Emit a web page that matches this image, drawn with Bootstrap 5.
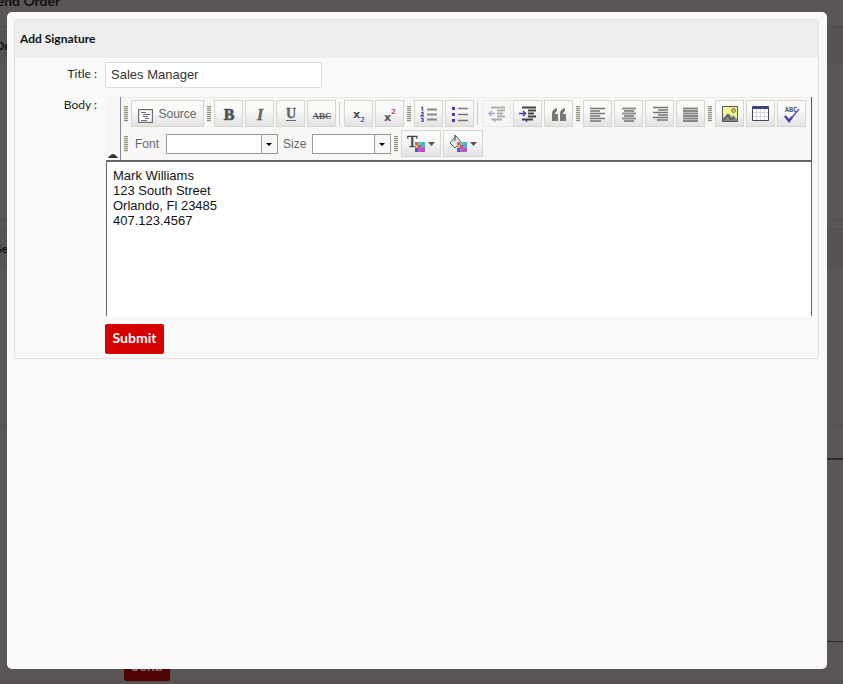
<!DOCTYPE html>
<html lang="en">
<head>
<meta charset="utf-8">
<meta name="viewport" content="width=device-width, initial-scale=1">
<title>Add Signature</title>
<link rel="stylesheet" href="https://cdn.jsdelivr.net/npm/bootstrap@5.3.0/dist/css/bootstrap.min.css">
<style>
  body { background: #5a5655; font-family: Lato, sans-serif; font-size: 12px; color: #222; overflow: hidden; }

  /* dimmed page behind the dialog */
  .order-page { color: #141212; }
  .order-page h1 { font-size: 14px; line-height: 18px; font-weight: 700; margin: -8px 0 16px -11px; }
  .order-page h2 { font-size: 12px; line-height: 38px; font-weight: 700; margin: 0; background: #575353; text-indent: -5px; }
  .order-panel { border-top: 1px solid #524e4d; border-bottom: 1px solid #524e4d; }
  .panel-items { height: 155px; }
  .panel-mail { height: 158px; border-bottom: 1px solid #524e4d; }
  .mail-editor { margin: 32px 0 9px 124px; height: 184px; border-top: 2px solid #2d2a2a; border-bottom: 1px solid #2d2a2a; }
  .send-btn { background: #4f0404; color: #817878; border: 0; border-radius: 2px; font-weight: 700; font-size: 14px; width: 46px; height: 30px; margin-left: 124px; padding: 0 0 2px; display: block; }

  .overlay { padding: 12px 16px 15px 7px; }
  .sheet { background: #f9f9f9; border-radius: 5px; padding: 7px 8px 7px 7px; }
  .sig-panel { border: 1px solid #e0e0e0; border-radius: 3px; padding-bottom: 4px; }
  .sig-head { background: #eee; line-height: 38px; font-weight: 700; padding-left: 5px; color: #111; }
  .sig-row { padding-right: 6px; }
  .body-row { margin-top: 9px; }
  .sig-label { width: 82px; text-align: right; line-height: 16px; margin-right: 8px; flex: none; }
  .arial { font-family: "Liberation Sans", Arial, sans-serif; }
  .title-box { width: 217px; height: 26px; border: 1px solid #ddd; border-radius: 2px; padding: 0 5px 1px; font-size: 13px; color: #333; background: #fff; }

  .editor { margin-left: 1px; }
  .tool-area { background: #f7f7f7; border-right: 1px solid #555; border-bottom: 2px solid #666; height: 65px; }
  .collapser { width: 15px; border: 0; border-right: 1px solid #888; background: #f6f6f5; padding: 0 0 2px; line-height: 0; }
  .tools { border-top: 1px solid #efeee6; padding: 2px 0 0 2px; }
  .tool-row { gap: 2px; margin-bottom: 3px; color: #666; font-size: 13px; }
  .tool-row label { font-size: 12px; }
  .tool { width: 29px; height: 27px; padding: 0; border: 1px solid #d9d7c9; background: linear-gradient(#fafafa 35%, #e2e2e4); display: flex; align-items: center; justify-content: center; color: #666; }
  .tool svg { display: block; }
  .tool-source { width: 73px; gap: 5px; font-size: 12px; }
  .tool-wide { width: 40px; gap: 3px; }
  .tool:disabled { border-color: #eae9e2; background: #f6f6f6; }
  .tool:disabled svg { opacity: .4; }
  .grip { width: 4px; height: 16px; margin: 0 1px; background: repeating-linear-gradient(#8f8d72 0 1px, #e6e5da 1px 2px); }
  .split { width: 1px; height: 23px; background: #ccc; margin: 0 2px 0 1px; }
  .drop { height: 20px; appearance: none; border: 1px solid #999; border-radius: 0; padding: 0 18px 0 2px; font-size: 12px;
    background: #fff url("data:image/svg+xml,%3Csvg xmlns='http://www.w3.org/2000/svg' width='16' height='18'%3E%3Cpath fill='%23f7f7f5' d='M0 0h16v18H0z'/%3E%3Cpath fill='%23999' d='M0 0h1v18H0z'/%3E%3Cpath d='M5 8h6l-3 3z'/%3E%3C/svg%3E") no-repeat right top; }
  .font-label { margin-left: 4px; }
  .font-drop { width: 112px; margin: 0 3px 0 5px; }
  .size-drop { width: 79px; margin-left: 4px; }
  .sig-body { display: block; height: 154px; border: 1px solid #666; border-width: 0 1px; padding: 6px; font-size: 13px; line-height: 15px; color: #111; resize: none; background: #fff; outline: 0; }
  .submit-btn { margin: 8px 0 0 90px; width: 59px; height: 30px; padding: 0 0 4px; background: #d60000; color: #fff; border: 0; border-radius: 2px; font-weight: 700; font-size: 14px; }
</style>
<script src="https://cdn.jsdelivr.net/npm/bootstrap@5.3.0/dist/js/bootstrap.bundle.min.js"></script>
</head>
<body>
<svg class="d-none" aria-hidden="true">
  <defs>
    <g id="swatches">
      <path fill="#a07040" d="M0 0h10v10H0z"/>
      <path fill="#e06060" d="M0 0h3v3H0z"/><path fill="#50c8c0" d="M3 0h3v3H3z"/><path fill="#58b0b8" d="M6 0h4v3H6z"/>
      <path fill="#d8b040" d="M0 3h3v3H0z"/><path fill="#d05080" d="M3 3h3v3H3z"/><path fill="#50a8e0" d="M6 3h4v3H6z"/>
      <path fill="#5060c0" d="M0 6h3v4H0z"/><path fill="#c060c8" d="M3 6h3v4H3z"/><path fill="#b058c0" d="M6 6h4v4H6z"/>
    </g>
  </defs>
</svg>

<div class="order-page">
  <h1>Send Order</h1>
  <section class="order-panel"><h2>Order</h2><div class="panel-items"></div></section>
  <section class="order-panel mt-2"><h2>Send</h2><div class="panel-mail"></div>
    <div class="mail-editor"></div>
    <button type="button" class="send-btn">Send</button>
  </section>
</div>

<div class="overlay position-fixed top-0 start-0 w-100 h-100 d-flex" role="dialog" aria-labelledby="sigTitle">
  <main class="sheet flex-grow-1">
    <form class="sig-panel">
      <div class="sig-head" id="sigTitle">Add Signature</div>
      <div class="sig-row d-flex mt-1">
        <label class="sig-label pt-1" for="title">Title :</label>
        <input class="title-box arial" id="title" type="text" value="Sales Manager">
      </div>
      <div class="sig-row body-row d-flex">
        <label class="sig-label" for="body">Body :</label>
        <div class="editor flex-grow-1 arial">
          <div class="tool-area d-flex">
            <button type="button" class="collapser d-flex align-items-end justify-content-center" aria-label="Collapse toolbar"><svg width="10" height="4"><path d="M0 4C1 2 4 0 5 0s4 2 5 4z" fill="#333"/></svg></button>
            <div class="tools flex-grow-1">
              <div class="tool-row d-flex align-items-center">
                <span class="grip"></span>
                <button type="button" class="tool tool-source"><svg width="15" height="14" class="mt-1" fill="none" stroke="#6c6c7c"><path d="M.5 .5h14v13H.5z" fill="#fff" stroke-width="1.4"/><path d="M3 3.5h5M5 5.5h7M5 7.5h5M7 9.5h4M3 11.5h6"/></svg><span>Source</span></button>
                <span class="grip"></span>
                <button type="button" class="tool" aria-label="Bold"><svg width="16" height="16"><text x="8" y="14" text-anchor="middle" font-family="Liberation Serif" font-weight="700" font-size="16" fill="#505050" stroke="#505050" stroke-width=".6">B</text></svg></button>
                <button type="button" class="tool" aria-label="Italic"><svg width="16" height="16"><text x="8" y="14" text-anchor="middle" font-family="Liberation Serif" font-weight="700" font-style="italic" font-size="16" fill="#666" stroke="#666" stroke-width=".4">I</text></svg></button>
                <button type="button" class="tool" aria-label="Underline"><svg width="16" height="16"><text x="8" y="12" text-anchor="middle" font-family="Liberation Serif" font-weight="700" font-size="14" fill="#666" stroke="#666" stroke-width=".4">U</text><path d="M3 14.500h10" stroke="#666"/></svg></button>
                <button type="button" class="tool" aria-label="Strike through"><svg width="20" height="16"><text x="10" y="13" text-anchor="middle" font-family="Liberation Serif" font-weight="700" font-size="9" fill="#555">ABC</text><path d="M1 10.500h18" stroke="#555"/></svg></button>
                <span class="split"></span>
                <button type="button" class="tool" aria-label="Subscript"><svg width="16" height="16"><text x="2" y="12" font-family="DejaVu Sans" font-weight="700" font-size="11" fill="#505050">x</text><text x="9" y="16" font-family="DejaVu Sans" font-weight="700" font-size="7" fill="#6464c4">2</text></svg></button>
                <button type="button" class="tool" aria-label="Superscript"><svg width="16" height="16"><text x="2" y="15" font-family="DejaVu Sans" font-weight="700" font-size="11" fill="#505050">x</text><text x="9" y="8" font-family="DejaVu Sans" font-weight="700" font-size="7" fill="#c45050">2</text></svg></button>
                <span class="grip"></span>
                <button type="button" class="tool" aria-label="Numbered list"><svg width="18" height="16"><path d="M7 3.500h10M7 8.500h10M7 13.500h10" stroke="#888" stroke-width="2"/><path d="M1 1.500h1.500V5M1 6.500h2v1.500l-2 2h3M1 12.500h2v1.500h-1h1v1.500h-2" fill="none" stroke="#5c5cb8" stroke-width="1.500"/></svg></button>
                <button type="button" class="tool" aria-label="Bulleted list"><svg width="18" height="16"><path d="M7 2.500h10M7 8.500h10M7 14.500h10" stroke="#777" stroke-width="1.500"/><path fill="#4040b0" d="M1 1h3v3H1zM1 7h3v3H1zM1 13h3v3H1z"/></svg></button>
                <span class="split"></span>
                <button type="button" class="tool" disabled aria-label="Decrease indent"><svg width="18" height="16"><path d="M3 1.500h14M9 4.500h8M9 7.500h6M9 10.500h8M3 13.500h11" stroke="#444" stroke-width="2"/><path d="M7 7.500H2M4 5l-3 2.500 3 2.500M7 14v2" fill="none" stroke="#4040b0" stroke-width="1.500"/></svg></button>
                <button type="button" class="tool" aria-label="Increase indent"><svg width="18" height="16"><path d="M3 1.500h14M9 4.500h8M9 7.500h6M9 10.500h8M3 13.500h11" stroke="#444" stroke-width="2"/><path d="M0 7.500h6M4 5l2.500 2.500L4 10M7.500 14v2" fill="none" stroke="#4040b0" stroke-width="1.500"/></svg></button>
                <button type="button" class="tool" aria-label="Block quote"><svg width="16" height="16" fill="#777"><path d="M1 15V8q0-5 5-6v3Q4 6 4 8h3v7zM9 15V8q0-5 5-6v3q-2 1-2 3h3v7z"/></svg></button>
                <span class="grip"></span>
                <button type="button" class="tool" aria-label="Align left"><svg width="16" height="16" stroke="#777" stroke-width="1.500"><path d="M0 2.500h15M0 5h10M0 7.500h15M0 10h10M0 12.500h15M0 15h11"/></svg></button>
                <button type="button" class="tool" aria-label="Align centre"><svg width="16" height="16" stroke="#909090" stroke-width="2"><path d="M1 2.500h14M3 5h10M1 7.500h14M3 10h10M1 12.500h14M3 15h10"/></svg></button>
                <button type="button" class="tool" aria-label="Align right"><svg width="16" height="16" stroke="#777" stroke-width="1.500"><path d="M1 1.500h15M6 4h10M1 6.500h15M6 9h10M1 11.500h15M5 14h11"/></svg></button>
                <button type="button" class="tool" aria-label="Justify"><svg width="16" height="16" stroke="#888" stroke-width="2"><path d="M0 2.500h15M0 5h15M0 7.500h15M0 10h15M0 12.500h15M0 15h15"/></svg></button>
                <span class="grip"></span>
                <button type="button" class="tool" aria-label="Image"><svg width="16" height="16"><path fill="#f4f490" stroke="#555" d="M.5 .5h15v15H.5z"/><circle cx="11.500" cy="4.500" r="2" fill="#d8cc40" stroke="#777"/><path d="M1 15v-3l5-5 4 4 1-2 4 4v2z" fill="#888"/><path d="M2 14l4-5 3 5M10 14l2-3" stroke="#444" fill="none"/></svg></button>
                <button type="button" class="tool" aria-label="Table"><svg width="17" height="15"><path d="M.5 .5h16v14H.5z" fill="#fff" stroke="#445"/><path fill="#404090" d="M1 1h15v2H1z"/><path d="M1 6.500h15M1 10.500h15M4.500 3v11M8.500 3v11M12.500 3v11" stroke="#d4d4e4"/></svg></button>
                <button type="button" class="tool" aria-label="Check spelling"><svg width="18" height="18"><text x="8" y="7" text-anchor="middle" font-family="DejaVu Sans Mono" font-weight="700" font-size="7" fill="#555">ABC</text><path d="M2 11l4 5L16 4" fill="none" stroke="#5858b8" stroke-width="1.500"/><path d="M2 11l4 5 3-4" fill="none" stroke="#4848a8" stroke-width="2.500"/></svg></button>
              </div>
              <div class="tool-row d-flex align-items-center">
                <span class="grip"></span>
                <label class="font-label" for="font">Font</label>
                <select class="drop font-drop" id="font"><option></option></select>
                <label for="size">Size</label>
                <select class="drop size-drop" id="size"><option></option></select>
                <span class="grip"></span>
                <button type="button" class="tool tool-wide" aria-label="Text colour"><svg width="18" height="17"><text x="0" y="12" font-family="Liberation Serif" font-size="17" stroke="#444" stroke-width=".5" fill="#444">T</text><use href="#swatches" x="8" y="7"/></svg><svg width="7" height="4"><path d="M0 0h7L3.500 4z" fill="#555"/></svg></button>
                <button type="button" class="tool tool-wide" aria-label="Background colour"><svg width="18" height="17"><path d="M7 1L1 8l5 5 6-6zM7 1l-1-1v6" fill="#e8e8e8" stroke="#555"/><use href="#swatches" x="8" y="7"/></svg><svg width="7" height="4"><path d="M0 0h7L3.500 4z" fill="#555"/></svg></button>
              </div>
            </div>
          </div>
          <textarea class="sig-body w-100 arial" id="body">Mark Williams
123 South Street
Orlando, Fl 23485
407.123.4567</textarea>
        </div>
      </div>
      <button type="submit" class="submit-btn">Submit</button>
    </form>
  </main>
</div>
</body>
</html>
